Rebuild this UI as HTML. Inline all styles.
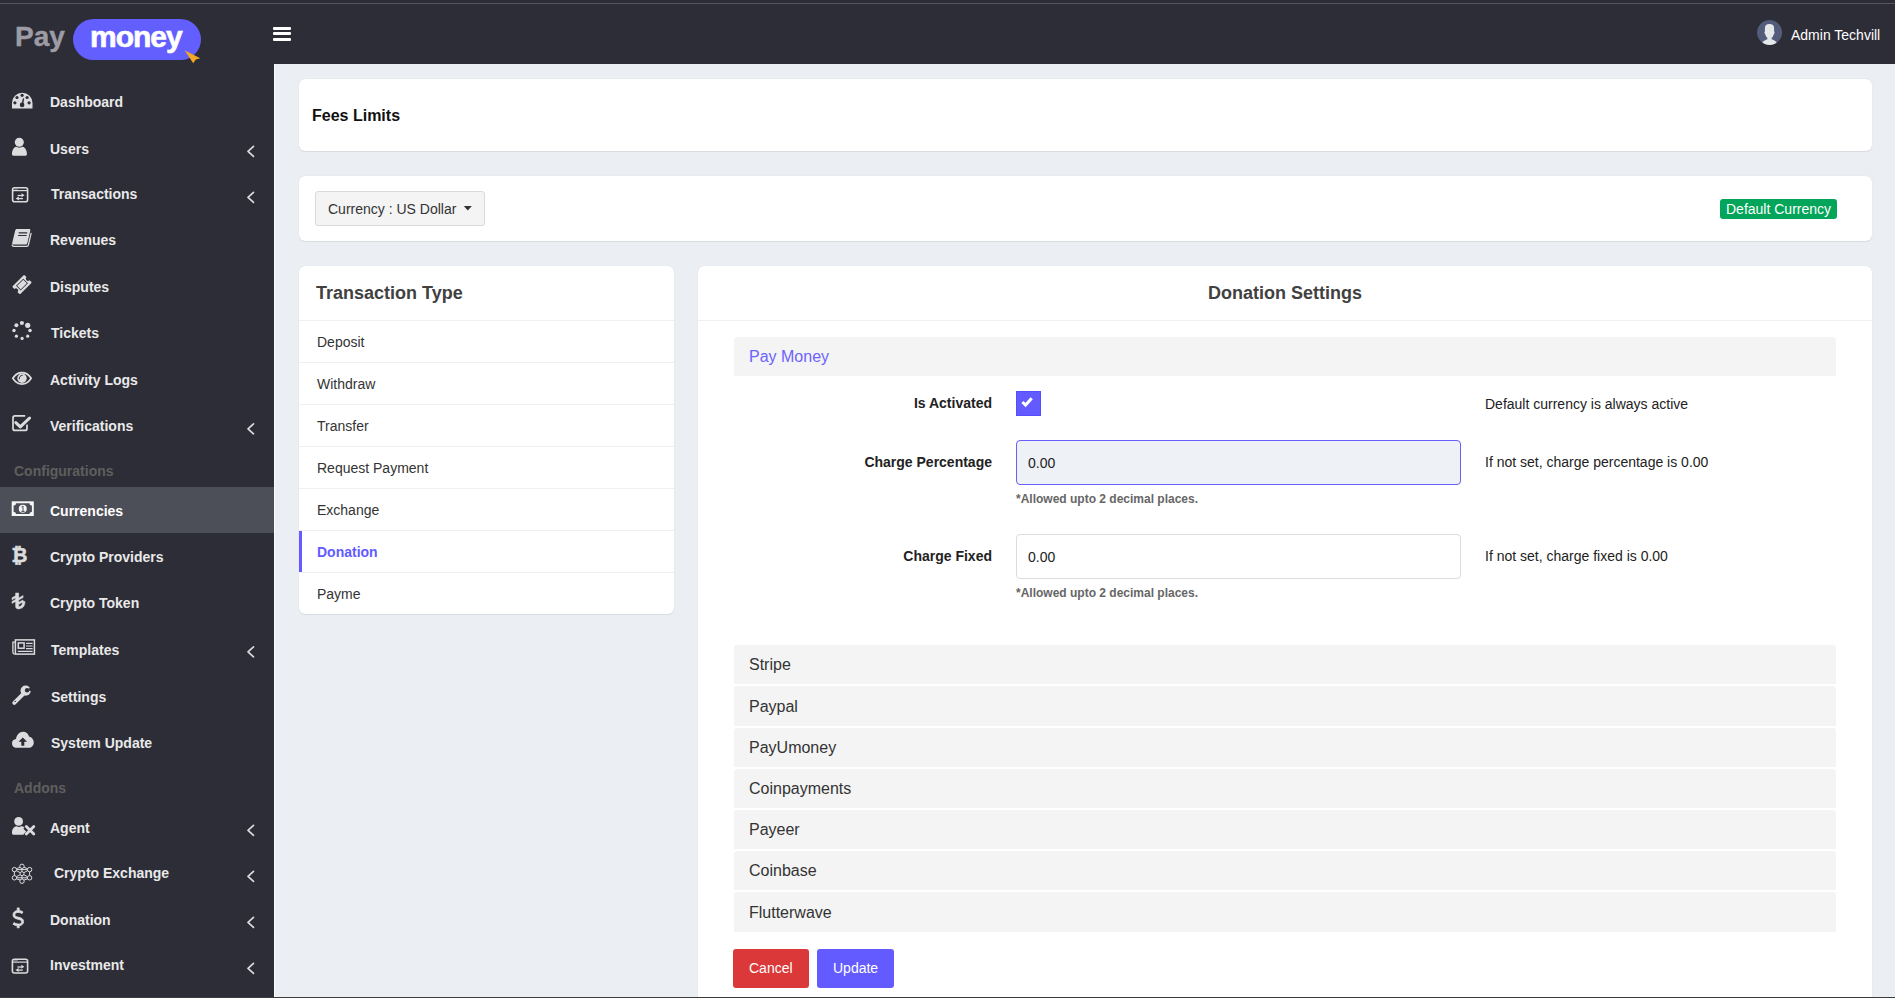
<!DOCTYPE html>
<html><head><meta charset="utf-8">
<style>
*{box-sizing:border-box;margin:0;padding:0}
html,body{width:1895px;height:998px;overflow:hidden;font-family:"Liberation Sans",sans-serif;background:#ebeef3;position:relative}
.a{position:absolute;white-space:nowrap}
#topbar{position:absolute;left:0;top:0;width:1895px;height:64px;background:#2d2d37}
#topline{position:absolute;left:0;top:3px;width:1895px;height:1px;background:#55555f}
#sidebar{position:absolute;left:0;top:64px;width:274px;height:934px;background:#2d2d37}
.st{position:absolute;color:#e9e9ea;font-weight:bold;font-size:14px;line-height:20px;white-space:nowrap}
.sec{position:absolute;left:14px;color:#5f5f5d;font-weight:bold;font-size:14px;line-height:20px}
.card{position:absolute;background:#fff;border-radius:6px;box-shadow:0 1px 1px rgba(0,0,0,.07),0 0 1px rgba(0,0,0,.14)}
.tt{position:absolute;left:299px;width:375px;height:42px;border-top:1px solid #efefef;font-size:14px;color:#333;line-height:20px;padding-left:18px}
.lbl{position:absolute;font-weight:bold;font-size:14px;color:#222;text-align:right;width:300px;left:692px;line-height:20px}
.help{position:absolute;font-size:14px;color:#222;left:1485px;line-height:20px;white-space:nowrap}
.small{position:absolute;font-size:12px;font-weight:bold;color:#666;left:1016px;line-height:16px;white-space:nowrap}
.inp{position:absolute;left:1016px;width:445px;height:45px;border:1px solid #dcdcdc;border-radius:4px;background:#fff;font-size:14px;color:#222;padding-left:11px;line-height:43px}
.pnl{position:absolute;left:734px;width:1102px;height:39.4px;background:#f4f4f4;border-radius:3px 3px 0 0;font-size:16px;color:#333;padding-left:15px;line-height:20px;padding-top:10.4px}
</style></head>
<body>
<div id="topbar"></div>
<div id="topline"></div>
<div id="sidebar"></div>

<div class="a" style="left:274px;top:64px;width:1px;height:934px;background:#fafbfc"></div>

<!-- logo -->
<div class="a" style="left:15px;top:17px;font-size:28px;font-weight:bold;color:#9d9ca4;line-height:40px;letter-spacing:0;-webkit-text-stroke:0.4px #9d9ca4">Pay</div>
<div class="a" style="left:73px;top:19px;width:128px;height:41px;border-radius:21px;background:#635fff"></div>
<div class="a" style="left:90px;top:17px;font-size:30px;font-weight:bold;color:#fff;line-height:40px;letter-spacing:-1px;-webkit-text-stroke:0.6px #fff">money</div>
<svg class="a" style="left:0;top:0" width="274" height="64"><path d="M184.6 50.3 L200.3 58.2 L195.8 59.6 L193.2 63.3 Z" fill="#f5a623"/></svg>
<!-- hamburger -->
<div class="a" style="left:273px;top:27px;width:18px;height:3px;background:#fff;border-radius:1px"></div>
<div class="a" style="left:273px;top:32px;width:18px;height:3px;background:#fff;border-radius:1px"></div>
<div class="a" style="left:273px;top:38px;width:18px;height:3px;background:#fff;border-radius:1px"></div>
<!-- user -->
<svg class="a" style="left:1755px;top:18px" width="30" height="30" viewBox="0 0 30 30">
<defs><clipPath id="cc"><circle cx="14.6" cy="14.5" r="12.5"/></clipPath></defs>
<circle cx="14.6" cy="14.5" r="12.5" fill="#535d7b"/>
<g clip-path="url(#cc)" fill="#e6e7ea"><path d="M14.5 5.9 C11.4 5.9 9.9 7 9.9 10 L9.9 13.4 C9.3 13.9 9.3 15.4 10.1 15.9 C10.6 17.8 11.5 19.2 12.4 19.9 L12.4 21.2 C10 22.2 7.2 23.2 5.5 27.5 L23.5 27.5 C21.8 23.2 19 22.2 16.6 21.2 L16.6 19.9 C17.5 19.2 18.4 17.8 18.9 15.9 C19.7 15.4 19.7 13.9 19.1 13.4 L19.1 10 C19.1 7 17.6 5.9 14.5 5.9 Z"/></g>
</svg>
<div class="a" style="left:1791px;top:25px;font-size:14px;color:#fff;line-height:20px">Admin Techvill</div>

<!-- sidebar active -->
<div class="a" style="left:0;top:487px;width:274px;height:46px;background:#4c4e58"></div>
<div class="sec" style="top:461px">Configurations</div>
<div class="sec" style="top:778px">Addons</div>

<div class="st" style="top:92px;left:50px">Dashboard</div>
<div class="st" style="top:139px;left:50px">Users</div>
<div class="st" style="top:184px;left:51px">Transactions</div>
<div class="st" style="top:230px;left:50px">Revenues</div>
<div class="st" style="top:277px;left:50px">Disputes</div>
<div class="st" style="top:323px;left:51px">Tickets</div>
<div class="st" style="top:370px;left:50px">Activity Logs</div>
<div class="st" style="top:416px;left:50px">Verifications</div>
<div class="st" style="top:501px;left:50px;color:#fff">Currencies</div>
<div class="st" style="top:547px;left:50px">Crypto Providers</div>
<div class="st" style="top:593px;left:50px">Crypto Token</div>
<div class="st" style="top:640px;left:51px">Templates</div>
<div class="st" style="top:687px;left:51px">Settings</div>
<div class="st" style="top:733px;left:51px">System Update</div>
<div class="st" style="top:818px;left:50px">Agent</div>
<div class="st" style="top:863px;left:54px">Crypto Exchange</div>
<div class="st" style="top:910px;left:50px">Donation</div>
<div class="st" style="top:955px;left:50px">Investment</div>

<svg class="a" style="left:0;top:0" width="274" height="998">
<g fill="none" stroke="#dcdcdf" stroke-width="1.7" stroke-linecap="round" stroke-linejoin="round">
<path d="M253.5 146.4 L248 151.4 L253.5 156.4"/>
<path d="M253.5 192.4 L248 197.4 L253.5 202.4"/>
<path d="M253.5 423.8 L248 428.8 L253.5 433.8"/>
<path d="M253.5 646.8 L248 651.8 L253.5 656.8"/>
<path d="M253.5 825.3 L248 830.3 L253.5 835.3"/>
<path d="M253.5 871.4 L248 876.4 L253.5 881.4"/>
<path d="M253.5 917.4 L248 922.4 L253.5 927.4"/>
<path d="M253.5 963.4 L248 968.4 L253.5 973.4"/>
</g>
<g id="icons" fill="#dcdcdf">
<!-- dashboard gauge -->
<path d="M12 108.5 V103 A10.25 10.25 0 0 1 32.5 103 V108.5 Z"/>
<g fill="#2d2d37"><circle cx="22.1" cy="95.3" r="1.6"/><circle cx="17" cy="97.5" r="1.6"/><circle cx="27.1" cy="97.5" r="1.6"/><circle cx="14.9" cy="102.8" r="1.6"/><circle cx="29.1" cy="102.8" r="1.6"/><circle cx="22.1" cy="104.9" r="2.3"/><path d="M21.3 104.6 L23 98.2 L24.2 98.5 L23 104.9 Z"/></g>
<!-- user -->
<path d="M12 153.8 C12 149.6 14.4 146.4 17.2 146.4 C18 147 18.6 147.3 19.4 147.3 C20.2 147.3 20.8 147 21.6 146.4 C24.4 146.4 26.9 149.6 26.9 153.8 V154.3 C26.9 155.2 26.2 155.8 25.3 155.8 H13.6 C12.7 155.8 12 155.2 12 154.3 Z"/>
<circle cx="19.3" cy="142.2" r="5.3" fill="#2d2d37"/>
<circle cx="19.3" cy="142.2" r="4.5"/>
<!-- transactions -->
<g id="winx"><rect x="12.6" y="187.7" width="15" height="14" rx="2" fill="none" stroke="#dcdcdf" stroke-width="1.6"/>
<path d="M12.6 190.6 H27.6" stroke="#dcdcdf" stroke-width="1.2"/>
<path d="M14.2 189.2 H18" stroke="#dcdcdf" stroke-width="0.8" opacity="0.6"/>
<path d="M17.6 195.5 H21.8" stroke="#dcdcdf" stroke-width="1.3"/><path d="M21.5 193.3 L24.6 195.3 L21.5 197.3 Z"/>
<path d="M23 198.6 H18.6" stroke="#dcdcdf" stroke-width="1.3"/><path d="M18.9 196.6 L15.6 198.6 L18.9 200.6 Z"/></g>
<!-- revenues book -->
<path d="M17 229 H29 C30 229 30.6 229.6 30.3 230.6 L27.3 243.2 C27.1 244 26.5 244.5 25.7 244.5 H13.6 C12.6 244.5 12 243.9 12.2 242.9 L15.2 230.6 C15.5 229.6 16.1 229 17 229 Z"/>
<path d="M31.2 232.8 L28.4 245 C28.2 245.8 27.6 246.3 26.8 246.3 H14 C12.8 246.3 12.1 245.6 12.1 244.4" fill="none" stroke="#dcdcdf" stroke-width="1.2"/>
<path d="M18.7 232.8 H27.2 M18.1 235.5 H26.6" stroke="#2d2d37" stroke-width="1.2"/>
<!-- disputes ticket -->
<g transform="rotate(-45 22 284.6)"><path d="M14.5 279.1 H29.5 A1 1 0 0 1 30.5 280.1 V282.4 A2.2 2.2 0 0 0 30.5 286.8 V289.1 A1 1 0 0 1 29.5 290.1 H14.5 A1 1 0 0 1 13.5 289.1 V286.8 A2.2 2.2 0 0 0 13.5 282.4 V280.1 A1 1 0 0 1 14.5 279.1 Z"/><rect x="16.9" y="281.3" width="10.2" height="6.6" fill="#2d2d37"/><rect x="17.7" y="282.1" width="8.6" height="5" fill="#dcdcdf"/></g>
<!-- tickets spinner -->
<circle cx="21.9" cy="323" r="2.1"/><circle cx="27.7" cy="325.3" r="2.6"/><circle cx="30" cy="330.5" r="1.8"/><circle cx="27.7" cy="336.2" r="1.6"/><circle cx="22.1" cy="338.4" r="1.6"/><circle cx="16.4" cy="336.2" r="1.6"/><circle cx="14" cy="330.5" r="1.7"/><circle cx="16.4" cy="325.3" r="2"/>
<!-- eye -->
<path d="M11.8 378.3 C15 372.8 19 371.8 22 371.8 C25 371.8 29 372.8 32.2 378.3 C29 383.8 25 384.9 22 384.9 C19 384.9 15 383.8 11.8 378.3 Z M13.9 378.3 C16.5 382.1 19.5 383.3 22 383.3 C24.5 383.3 27.5 382.1 30.1 378.3 C27.5 374.5 24.5 373.4 22 373.4 C19.5 373.4 16.5 374.5 13.9 378.3 Z" fill-rule="evenodd"/>
<circle cx="22" cy="378.3" r="4.7"/>
<path d="M19.4 379.2 A2.9 2.9 0 0 1 22.6 375.5" fill="none" stroke="#2d2d37" stroke-width="1"/>
<!-- verifications check-square -->
<path d="M25.2 415.9 H15 A2 2 0 0 0 13 417.9 V428.4 A2 2 0 0 0 15 430.4 H25 A2 2 0 0 0 27 428.4 V424.6" fill="none" stroke="#dcdcdf" stroke-width="1.7"/>
<path d="M22 425.3 L29.6 418" fill="none" stroke="#2d2d37" stroke-width="5" stroke-linecap="round"/>
<path d="M15.8 422.6 L20.3 426.9 L29.6 418" fill="none" stroke="#dcdcdf" stroke-width="3" stroke-linecap="round" stroke-linejoin="round"/>
<!-- currencies bill -->
<rect x="11.7" y="501.3" width="22.1" height="14.7" fill="#f6f6f7"/>
<path d="M16 503.2 H29.5 A2.2 2.2 0 0 0 31.9 505.4 V511.9 A2.2 2.2 0 0 0 29.5 514.1 H16 A2.2 2.2 0 0 0 13.6 511.9 V505.4 A2.2 2.2 0 0 0 16 503.2 Z" fill="#4c4e58"/>
<circle cx="22.75" cy="508.65" r="4" fill="#f6f6f7"/>
<path d="M21.5 507 L23 506 V511.4 M21.4 511.4 H24.6" stroke="#4c4e58" stroke-width="1" fill="none"/>
<!-- bitcoin -->
<text x="11.6" y="561.9" font-family="Liberation Sans" font-weight="bold" font-size="19.5" stroke="#dcdcdf" stroke-width="0.6">₿</text>
<!-- crypto token lira -->
<path stroke="#dcdcdf" stroke-width="0.5" d="M15.6 593 V606.2 C15.6 608.2 16.6 608.9 18.6 608.9 C22.3 608.9 25 606.3 25 601.6 L22.7 601.6 C22.7 604.8 21 606.7 18.7 606.7 V604.3 L23.1 601.9 V599.9 L18.7 602.3 V600 L23.1 597.6 V595.6 L18.7 598 V593 Z M12 601.4 L15.6 599.4 V601.4 L12 603.4 Z M12 597.8 L15.6 595.8 V597.8 L12 599.8 Z"/>
<!-- templates newspaper -->
<rect x="15.4" y="639.9" width="19" height="14.2" fill="none" stroke="#dcdcdf" stroke-width="1.5"/>
<path d="M15.4 642.2 H12.9 V652.3 A1.8 1.8 0 0 0 14.7 654.1" fill="none" stroke="#dcdcdf" stroke-width="1.3"/>
<rect x="18.3" y="642.9" width="5.8" height="5.3" fill="none" stroke="#dcdcdf" stroke-width="1.5"/>
<path d="M26 643.3 H32.6 M26 646 H32.6 M26 648.7 H32.6 M17.8 651.3 H32.6" stroke="#dcdcdf" stroke-width="1.2"/>
<!-- settings wrench -->
<path d="M14.3 702.8 L22.6 694.6" stroke="#dcdcdf" stroke-width="4" stroke-linecap="round"/>
<circle cx="25.6" cy="690.7" r="5.1"/>
<circle cx="27.1" cy="690.3" r="2.2" fill="#2d2d37"/>
<path d="M27.1 690.3 L31.4 686.4 L32 690.9 Z" fill="#2d2d37"/>
<circle cx="15.2" cy="701.4" r="0.7" fill="#2d2d37"/>
<!-- system update cloud -->
<path d="M17 747.8 C13.5 747.8 12 745.5 12 743.2 C12 740.8 13.8 739.3 16 739 C16.5 735 19.5 731.8 23 731.8 C26 731.8 28.2 733.8 29 736.6 C32 737.3 33.8 739.8 33.8 742.5 C33.8 745.5 31.5 747.8 28.5 747.8 Z"/>
<path d="M22.8 737.5 L18.5 741.8 H21.3 V745.8 H24.3 V741.8 H27.1 Z" fill="#2d2d37"/>
<!-- agent user-times -->
<path d="M12 832.5 C12 829 14.2 826.3 17 826.3 C17.7 826.8 18.3 827 19 827 C19.7 827 20.3 826.8 21 826.3 C22.5 826.3 23.6 826.8 24.5 827.6 L23.4 828.7 L26.2 831.5 L23.3 834.7 H13.6 C12.7 834.7 12 834 12 833.2 Z"/>
<circle cx="18.6" cy="821.4" r="5.1" fill="#2d2d37"/>
<circle cx="18.6" cy="821.4" r="4.4"/>
<path d="M26.3 826.5 L33.8 834 M33.8 826.5 L26.3 834" stroke="#dcdcdf" stroke-width="2.8" stroke-linecap="round"/>
<!-- crypto exchange -->
<g fill="none" stroke="#dcdcdf" stroke-width="1">
<circle cx="22" cy="866.3" r="2.2"/><circle cx="22" cy="881.2" r="2.2"/><circle cx="22" cy="873.7" r="2"/>
<circle cx="14.4" cy="869.6" r="2.2"/><circle cx="29.6" cy="869.6" r="2.2"/><circle cx="14.4" cy="877.8" r="2.2"/><circle cx="29.6" cy="877.8" r="2.2"/>
<path d="M16.6 869.6 H27.4 M16.6 877.8 H27.4 M22 868.5 V871.7 M22 875.7 V879 M20.1 867.4 L16.4 868.6 M23.9 867.4 L27.6 868.6 M20.1 880.1 L16.4 878.8 M23.9 880.1 L27.6 878.8 M14.4 871.8 V875.6 M29.6 871.8 V875.6 M20.2 872.7 L16.3 870.6 M23.8 872.7 L27.7 870.6 M20.2 874.7 L16.3 876.8 M23.8 874.7 L27.7 876.8"/>
</g>
<!-- donation dollar -->
<path stroke="#dcdcdf" stroke-width="0.8" d="M17.2 907.9 V910.6 C14.7 911 13 912.6 13 914.9 C13 917.6 15.3 918.5 17.8 919.2 L19 919.5 C20.8 920 21.7 920.6 21.7 921.9 C21.7 923.3 20.3 924 18.4 924 C16.6 924 15 923.4 14 922.6 L13 924.3 C14.1 925.1 15.6 925.6 17.2 925.8 V927.8 H19.2 V925.8 C21.8 925.5 23.6 923.9 23.6 921.6 C23.6 918.9 21.4 918 18.9 917.3 L17.7 917 C15.8 916.5 14.9 916 14.9 914.7 C14.9 913.3 16.2 912.4 18.1 912.4 C19.7 912.4 21 912.9 22 913.6 L23 911.9 C22 911.2 20.7 910.7 19.2 910.5 V907.9 Z"/>
<!-- investment -->
<g transform="translate(-0.2 771.5)"><rect x="12.6" y="187.7" width="15.2" height="13.8" rx="2" fill="none" stroke="#dcdcdf" stroke-width="1.6"/>
<path d="M12.6 190.6 H27.8" stroke="#dcdcdf" stroke-width="1.2"/>
<path d="M14.2 189.2 H18" stroke="#dcdcdf" stroke-width="0.8" opacity="0.6"/>
<path d="M17.6 195.5 H21.8" stroke="#dcdcdf" stroke-width="1.3"/><path d="M21.5 193.3 L24.6 195.3 L21.5 197.3 Z"/>
<path d="M23 198.6 H18.6" stroke="#dcdcdf" stroke-width="1.3"/><path d="M18.9 196.6 L15.6 198.6 L18.9 200.6 Z"/></g>
</g>
</svg>


<!-- main cards -->
<div class="card" style="left:299px;top:79px;width:1573px;height:72px"></div>
<div class="a" style="left:312px;top:106px;font-size:16px;font-weight:bold;color:#111;line-height:20px">Fees Limits</div>

<div class="card" style="left:299px;top:176px;width:1573px;height:65px"></div>
<div class="a" style="left:315px;top:191px;width:170px;height:35px;background:#f4f4f4;border:1px solid #d9d9d9;border-radius:3px"></div>
<div class="a" style="left:328px;top:199px;font-size:14px;color:#333;line-height:20px">Currency : US Dollar</div>
<svg class="a" style="left:460px;top:202px" width="16" height="12"><path d="M3.8 4 L11.8 4 L7.8 8.6 Z" fill="#333"/></svg>
<div class="a" style="left:1720px;top:199px;width:117px;height:20px;background:#02a55a;border-radius:3px"></div>
<div class="a" style="left:1726px;top:199px;font-size:14px;color:#fff;line-height:20px">Default Currency</div>

<div class="card" style="left:299px;top:266px;width:375px;height:348px"></div>
<div class="a" style="left:316px;top:281px;font-size:18px;font-weight:bold;color:#414141;line-height:24px">Transaction Type</div>
<div class="a" style="left:299px;top:320px;width:375px;height:1px;background:#efefef"></div>
<div class="a" style="left:299px;top:362px;width:375px;height:1px;background:#efefef"></div>
<div class="a" style="left:299px;top:404px;width:375px;height:1px;background:#efefef"></div>
<div class="a" style="left:299px;top:446px;width:375px;height:1px;background:#efefef"></div>
<div class="a" style="left:299px;top:488px;width:375px;height:1px;background:#efefef"></div>
<div class="a" style="left:299px;top:530px;width:375px;height:1px;background:#efefef"></div>
<div class="a" style="left:299px;top:572px;width:375px;height:1px;background:#efefef"></div>
<div class="a" style="left:299px;top:531px;width:3px;height:41px;background:#635bff"></div>
<div class="a" style="left:317px;top:332px;font-size:14px;color:#333;line-height:20px">Deposit</div>
<div class="a" style="left:317px;top:374px;font-size:14px;color:#333;line-height:20px">Withdraw</div>
<div class="a" style="left:317px;top:416px;font-size:14px;color:#333;line-height:20px">Transfer</div>
<div class="a" style="left:317px;top:458px;font-size:14px;color:#333;line-height:20px">Request Payment</div>
<div class="a" style="left:317px;top:500px;font-size:14px;color:#333;line-height:20px">Exchange</div>
<div class="a" style="left:317px;top:542px;font-size:14px;color:#635bff;font-weight:bold;line-height:20px">Donation</div>
<div class="a" style="left:317px;top:584px;font-size:14px;color:#333;line-height:20px">Payme</div>

<div class="card" style="left:698px;top:266px;width:1174px;height:760px"></div>
<div class="a" style="left:698px;top:281px;width:1174px;text-align:center;font-size:18px;font-weight:bold;color:#414141;line-height:24px">Donation Settings</div>
<div class="a" style="left:698px;top:320px;width:1174px;height:1px;background:#efefef"></div>
<div class="a" style="left:734px;top:337px;width:1102px;height:39px;background:#f4f4f4;border-radius:3px 3px 0 0"></div>
<div class="a" style="left:749px;top:347px;font-size:16px;color:#6c63ff;line-height:20px">Pay Money</div>

<div class="lbl" style="top:393px">Is Activated</div>
<div class="a" style="left:1016px;top:391px;width:25px;height:25px;background:#635bff;border:1px solid #554dff"></div>
<svg class="a" style="left:1016px;top:391px" width="25" height="25"><path d="M6.4 11 L9.6 14.1 L15.7 7.3" fill="none" stroke="#fff" stroke-width="3"/></svg>
<div class="help" style="top:394px">Default currency is always active</div>

<div class="lbl" style="top:452px">Charge Percentage</div>
<div class="inp" style="top:440px;border-color:#6660ff;background:#eef1f5"></div>
<div class="a" style="left:1028px;top:453px;font-size:14px;color:#222;line-height:20px">0.00</div>
<div class="small" style="top:491px">*Allowed upto 2 decimal places.</div>
<div class="help" style="top:452px">If not set, charge percentage is 0.00</div>

<div class="lbl" style="top:546px">Charge Fixed</div>
<div class="inp" style="top:534px"></div>
<div class="a" style="left:1028px;top:547px;font-size:14px;color:#222;line-height:20px">0.00</div>
<div class="small" style="top:585px">*Allowed upto 2 decimal places.</div>
<div class="help" style="top:546px">If not set, charge fixed is 0.00</div>

<div class="pnl" style="top:644.6px">Stripe</div>
<div class="pnl" style="top:686.3px">Paypal</div>
<div class="pnl" style="top:727.6px">PayUmoney</div>
<div class="pnl" style="top:768.9px">Coinpayments</div>
<div class="pnl" style="top:810.1px">Payeer</div>
<div class="pnl" style="top:851.1px">Coinbase</div>
<div class="pnl" style="top:892.2px">Flutterwave</div>

<div class="a" style="left:733px;top:949px;width:76px;height:39px;background:#db3939;border-radius:3px"></div>
<div class="a" style="left:749px;top:958px;font-size:14px;color:#fff;line-height:20px">Cancel</div>
<div class="a" style="left:817px;top:949px;width:77px;height:39px;background:#635bff;border-radius:3px"></div>
<div class="a" style="left:833px;top:958px;font-size:14px;color:#fff;line-height:20px">Update</div>

<!-- bottom border -->
<div class="a" style="left:0;top:997px;width:1895px;height:1px;background:#3b3b3b"></div>
</body></html>
